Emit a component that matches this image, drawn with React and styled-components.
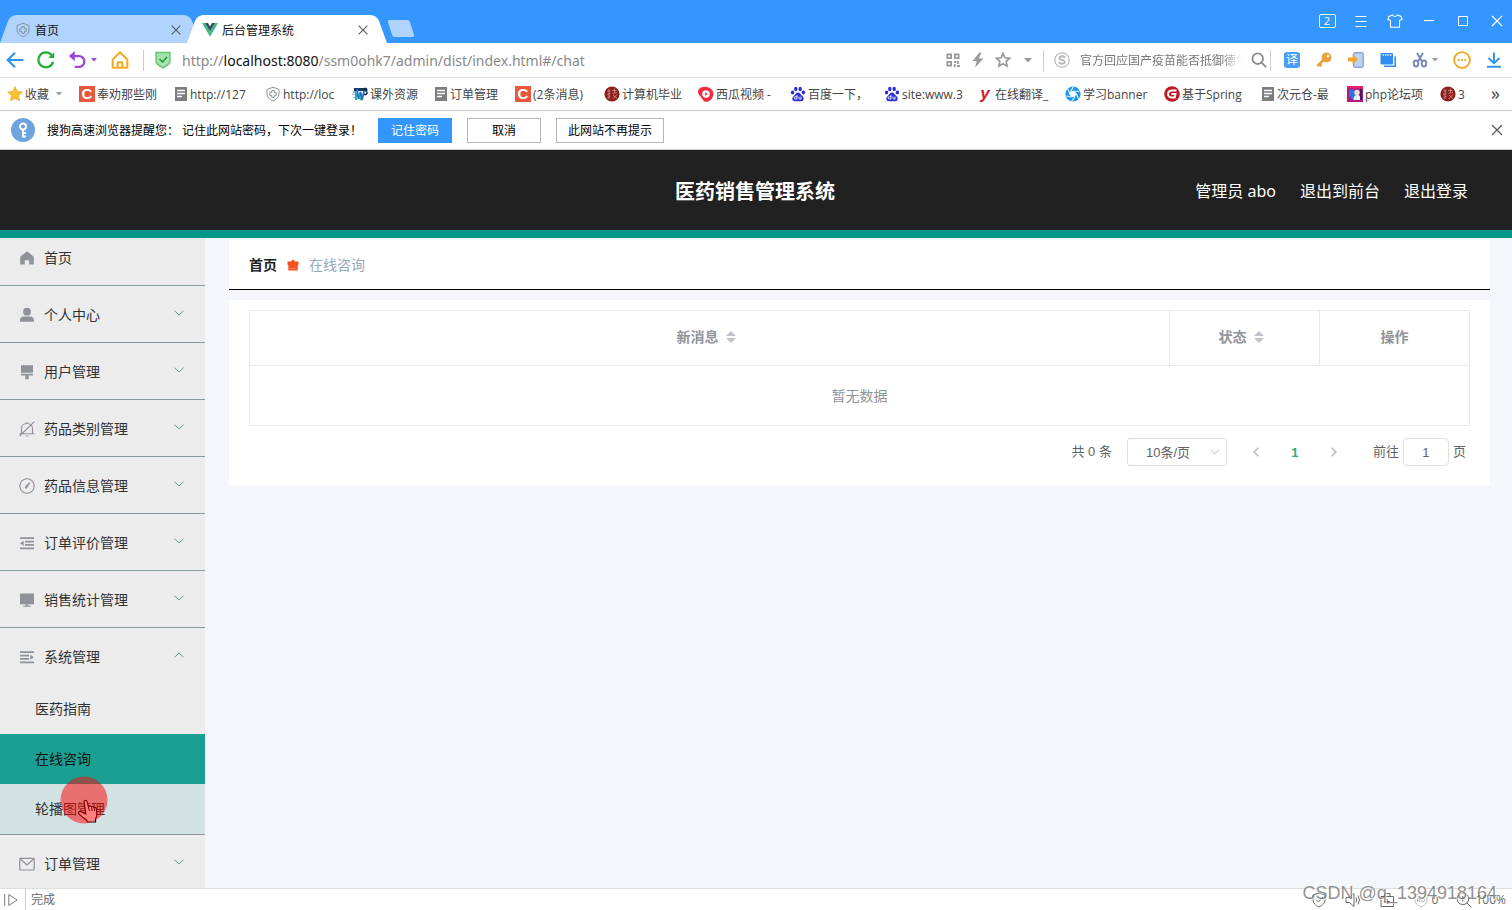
import React from "react";
import styled, { createGlobalStyle, css } from "styled-components";

const GlobalStyle = createGlobalStyle`
  *, *::before, *::after { box-sizing: border-box; }
  html, body { margin: 0; padding: 0; }
  body, button, input, select {
    font-family: "Open Sans", "Noto Sans CJK SC", sans-serif;
  }
  button { border: 0; padding: 0; margin: 0; background: none; cursor: pointer; }
  svg { display: block; flex: none; }
  a { color: inherit; text-decoration: none; }
  ul { list-style: none; margin: 0; padding: 0; }
`;

const Window = styled.div`
  display: flex;
  flex-direction: column;
  height: 100vh;
  overflow: hidden;
  background: #fff;
`;

/* ---------- title bar ---------- */

const TitleBar = styled.header`
  display: flex;
  align-items: flex-end;
  height: 43px;
  flex: none;
  background: #3496ff;
`;

const Tab = styled.div`
  position: relative;
  isolation: isolate;
  display: flex;
  align-items: center;
  width: 200px;
  height: 28px;
  padding: 2px 16px 0 15px;
  margin-right: -13px;
  z-index: ${(p) => (p.$active ? 2 : 1)};
  font-size: 12px;
  color: #111;
  button { color: #555; }
  &::before, &::after {
    content: "";
    position: absolute;
    z-index: -1;
    top: 0;
    bottom: 0;
    background: ${(p) => (p.$active ? "#fff" : "#b1d4ff")};
  }
  &::before {
    left: 0;
    right: 50%;
    transform: skewX(-20deg);
    transform-origin: bottom;
    border-radius: 6px 0 0 0;
  }
  &::after {
    left: 40%;
    right: 0;
    transform: skewX(20deg);
    transform-origin: bottom;
    border-radius: 0 6px 0 0;
  }
`;

const TabTitle = styled.span`
  flex: 1;
  margin-left: 4px;
  padding-top: 2px;
  line-height: 20px;
`;

const NewTab = styled.button`
  width: 22px;
  height: 17px;
  margin: 0 0 6px 16px;
  border-radius: 2px;
  background: #b1d4ff;
  transform: skewX(18deg);
`;

const WindowControls = styled.div`
  display: flex;
  align-items: center;
  gap: 14px;
  height: 43px;
  margin-left: auto;
  padding: 0 5px 2px 0;
  color: #fff;
`;

const IconButton = styled.button`
  display: flex;
  align-items: center;
  justify-content: center;
  flex: none;
  width: ${(p) => p.$w || 20}px;
  height: 20px;
  color: inherit;
`;

const TabCount = styled.span`
  display: block;
  width: 17px;
  height: 14px;
  border: 1px solid #fff;
  border-radius: 2px;
  font-size: 11px;
  line-height: 12px;
  color: #fff;
`;

/* ---------- toolbar ---------- */

const Toolbar = styled.div`
  display: flex;
  align-items: center;
  height: 35px;
  flex: none;
  border-bottom: 1px solid #e2e2e2;
`;

const NavGroup = styled.div`
  display: flex;
  align-items: center;
  gap: 11px;
  padding-left: 5px;
`;

const Pair = styled.div`
  display: flex;
  align-items: center;
  gap: ${(p) => p.$gap || 0}px;
`;

const Divider = styled.i`
  flex: none;
  width: 1px;
  height: 21px;
  margin: ${(p) => p.$m};
  background: #ccc;
`;

const Address = styled.div`
  flex: 1;
  margin-left: 9px;
  padding-top: 1px;
  font-family: "Noto Sans", sans-serif;
  font-size: 14px;
  line-height: 20px;
  color: #888;
  white-space: nowrap;
  b { font-weight: 400; color: #111; }
`;

const AddressTools = styled.div`
  display: flex;
  align-items: center;
  gap: 5px;
  color: #9a9a9a;
`;

const SearchBox = styled.label`
  display: flex;
  align-items: center;
  width: 216px;
  color: #8a8a8a;
  input {
    flex: 1;
    min-width: 0;
    margin: 0 6px 0 10px;
    padding: 1px 0 0;
    border: 0;
    outline: 0;
    font-size: 12px;
    line-height: 20px;
    color: #777;
    mask-image: linear-gradient(90deg, #000 88%, transparent);
  }
`;

const Extensions = styled.div`
  display: flex;
  align-items: center;
  gap: 12px;
  padding: 0 8px 0 11px;
`;

const Translate = styled.span`
  display: block;
  width: 16px;
  height: 16px;
  border-radius: 3px;
  background: #4a9df5;
  color: #fff;
  font-size: 12px;
  line-height: 16px;
  text-align: center;
`;

/* ---------- bookmarks ---------- */

const Bookmarks = styled.nav`
  display: flex;
  align-items: center;
  height: 33px;
  flex: none;
  padding-left: 7px;
  border-bottom: 1px solid #c9c9c9;
  color: #444;
  font-size: 12px;
`;

const Bookmark = styled.a`
  display: flex;
  align-items: center;
  gap: 2px;
  width: ${(p) => p.$w}px;
  flex: none;
  line-height: 20px;
  white-space: nowrap;
`;

const BookmarkLabel = styled.span`
  padding-top: 2px;
`;

const Favicon = styled.span`
  display: flex;
  align-items: center;
  justify-content: center;
  flex: none;
  width: 16px;
  height: 16px;
  background: ${(p) => p.$bg || "transparent"};
  color: ${(p) => p.$fg || "#fff"};
  font-family: "Liberation Sans", "Noto Sans CJK SC", sans-serif;
  font-weight: 700;
  font-style: ${(p) => (p.$italic ? "italic" : "normal")};
  font-size: ${(p) => p.$size || 14}px;
  line-height: 16px;
`;

const More = styled.button`
  margin-left: auto;
  padding: 0 12px 2px 0;
  font-size: 18px;
  line-height: 20px;
  color: #444;
`;

/* ---------- password prompt ---------- */

const Prompt = styled.div`
  display: flex;
  align-items: center;
  height: 39px;
  flex: none;
  padding: 0 5px 0 11px;
  border-bottom: 1px solid #ccc;
  font-size: 12px;
  color: #000;
  p { width: 331px; margin: 0 0 0 12px; padding-top: 2px; line-height: 20px; white-space: pre; }
`;

const PromptClose = styled(IconButton)`
  margin-left: auto;
  color: #555;
`;

const KeyBadge = styled.span`
  display: flex;
  align-items: center;
  justify-content: center;
  width: 24px;
  height: 24px;
  border-radius: 50%;
  background: #6fa3e0;
`;

const PromptButton = styled.button`
  min-width: 74px;
  height: 25px;
  margin-right: 15px;
  padding: 2px 11px 0;
  border: 1px solid ${(p) => (p.$primary ? "#3496ff" : "#b5b5b5")};
  background: ${(p) => (p.$primary ? "#3496ff" : "#fff")};
  color: ${(p) => (p.$primary ? "#fff" : "#000")};
  font-size: 12px;
  line-height: 20px;
`;

/* ---------- application ---------- */

const AppHeader = styled.header`
  display: grid;
  grid-template-columns: 1fr auto 1fr;
  align-items: center;
  height: 88px;
  flex: none;
  padding: 0 44px;
  background: #212121;
  border-bottom: 8px solid #009688;
  color: #fff;
  h1 { grid-column: 2; margin: 0; padding: 4px 2px 0 0; font-size: 20px; line-height: 28px; font-weight: 700; }
`;

const UserLinks = styled.nav`
  display: flex;
  justify-content: flex-end;
  gap: 24px;
  padding-top: 1px;
  font-family: "Noto Sans", "Noto Sans CJK SC", sans-serif;
  font-size: 16px;
  line-height: 24px;
`;

const Body = styled.div`
  display: flex;
  flex: 1;
  min-height: 0;
  background: #f4f6fb;
`;

const Sidebar = styled.nav`
  width: 205px;
  flex: none;
  overflow: hidden;
  background: #ececec;
`;

const MenuGroup = styled.li`
  border-bottom: 1px solid #859a9c;
`;

const MenuItem = styled.button`
  display: flex;
  align-items: center;
  width: 100%;
  height: ${(p) => (p.$top ? 47 : 56)}px;
  padding: 2px 20px 0 18px;
  padding-bottom: ${(p) => (p.$top ? 9 : 0)}px;
  text-align: left;
  font-size: 14px;
  line-height: 20px;
  color: #303133;
  span { flex: 1; margin-left: 8px; }
`;

const Chevron = styled.svg`
  margin-bottom: 4px;
  color: #5f9d96;
`;

const SubItem = styled.a`
  position: relative;
  display: flex;
  align-items: center;
  height: 50px;
  padding-left: 35px;
  font-size: 14px;
  line-height: 20px;
  color: #303133;
  ${(p) => p.$state === "active" && css`background: #1a9f92; color: #111;`}
  ${(p) => p.$state === "hover" && css`background: #d2e1e1;`}
`;

const Pointer = styled.svg`
  position: absolute;
  left: 60px;
  top: -8px;
`;

const Main = styled.main`
  flex: 1;
  min-width: 0;
  padding: 2px 22px 0 24px;
`;

const Breadcrumb = styled.nav`
  display: flex;
  align-items: center;
  gap: 10px;
  height: 50px;
  padding-left: 20px;
  margin-bottom: 10px;
  background: #fff;
  border-bottom: 1px solid #000;
  font-size: 14px;
  line-height: 20px;
  color: #97a8be;
  a { font-weight: 700; color: #222; }
`;

const Card = styled.section`
  padding: 10px 20px 20px;
  background: #fff;
`;

const Table = styled.table`
  width: 100%;
  table-layout: fixed;
  border-collapse: collapse;
  border: 1px solid #ebeaea;
  color: #909399;
  font-size: 14px;
  line-height: 23px;
  th, td { padding: 0; text-align: center; border: 1px solid #ebeaea; }
  th { height: 55px; padding-bottom: 3px; font-weight: 700; }
  td { height: 60px; }
`;

const SortHeader = styled.span`
  display: inline-flex;
  align-items: center;
  svg { margin: 0 7px; }
`;

const Pagination = styled.div`
  display: flex;
  justify-content: flex-end;
  align-items: center;
  margin-top: 12px;
  padding-right: 4px;
  font-family: "Liberation Sans", "Noto Sans CJK SC", sans-serif;
  font-size: 13px;
  line-height: 28px;
  color: #606266;
`;

const SizePicker = styled.div`
  position: relative;
  margin: 0 14px 0 15px;
  select {
    display: block;
    width: 100px;
    height: 28px;
    padding: 0 0 0 18px;
    appearance: none;
    border: 1px solid #dcdfe6;
    border-radius: 3px;
    background: #fff;
    color: #606266;
    font-family: inherit;
    font-size: 13px;
  }
  svg { position: absolute; right: 7px; top: 11px; pointer-events: none; }
`;

const PageButton = styled.button`
  display: flex;
  align-items: center;
  justify-content: center;
  width: ${(p) => (p.$current ? 48 : 30)}px;
  height: 28px;
  font-family: inherit;
  font-size: 13px;
  font-weight: 700;
  color: ${(p) => (p.$current ? "#2bab7f" : "#b8bcc5")};
`;

const Jumper = styled.label`
  display: flex;
  align-items: center;
  gap: 4px;
  margin-left: 24px;
  input {
    width: 46px;
    height: 28px;
    padding: 0;
    border: 1px solid #dcdfe6;
    border-radius: 4px;
    text-align: center;
    color: #606266;
    font-family: inherit;
    font-size: 13px;
  }
`;

/* ---------- status bar ---------- */

const StatusBar = styled.footer`
  position: relative;
  display: flex;
  align-items: center;
  height: 22px;
  flex: none;
  padding: 0 6px 0 4px;
  border-top: 1px solid #dedede;
  background: #fff;
  font-size: 12px;
  line-height: 20px;
  color: #666;
`;

const StatusTools = styled.div`
  display: flex;
  align-items: center;
  gap: 18px;
  margin-left: auto;
`;

const Watermark = styled.span`
  position: absolute;
  right: 15px;
  bottom: 7px;
  font-family: "Liberation Sans", sans-serif;
  font-size: 18px;
  line-height: 20px;
  color: rgba(110, 110, 110, 0.75);
  text-shadow: 1px 1px 0 rgba(255, 255, 255, 0.7);
  pointer-events: none;
`;

/* ---------- drawings ---------- */

const Stroke = ({ size = 16, w = 1, children, ...rest }) => (
  <svg width={size} height={size} viewBox="0 0 16 16" fill="none" stroke="currentColor" strokeWidth={w} aria-hidden="true" {...rest}>
    {children}
  </svg>
);

const CloseIcon = ({ size = 16 }) => (
  <Stroke size={size} w={1.2}><path d="M3 3l10 10M13 3L3 13" /></Stroke>
);

const ShieldCross = () => (
  <Stroke color="#8a8f98">
    <path d="M8 1.2L14 3.5v4.2c0 3.4-2.6 5.8-6 7.2-3.4-1.4-6-3.8-6-7.2V3.5z" />
    <path d="M6.7 4.700h2.600v2h2v2.600h-2v2H6.700v-2h-2V6.700h2z" />
  </Stroke>
);

const VueLogo = () => (
  <svg width="16" height="14" viewBox="0 0 16 14" aria-hidden="true">
    <path d="M0 0h3.200L8 8.300 12.800 0H16L8 13.800z" fill="#41b883" />
    <path d="M3.200 0H6l2 3.500L10 0h2.800L8 8.300z" fill="#35495e" />
  </svg>
);

const CaretDown = ({ color = "#999" }) => (
  <svg width="6" height="4" viewBox="0 0 6 4" aria-hidden="true"><path d="M0 0h6L3 3.500z" fill={color} /></svg>
);

const CaretDownWide = () => (
  <svg width="8" height="5" viewBox="0 0 8 5" aria-hidden="true"><path d="M0 0h8L4 4.500z" fill="#999" /></svg>
);

const DocIcon = () => (
  <svg width="14" height="16" viewBox="0 0 14 16" aria-hidden="true">
    <path d="M1 1h12v14H1z" fill="#7d7d7d" />
    <path d="M3 4.500h8M3 7.500h8M3 10.500h5" stroke="#fff" strokeWidth="1.300" />
  </svg>
);

const Paw = () => (
  <svg width="16" height="16" viewBox="0 0 16 16" fill="#2b2fd6" aria-hidden="true">
    <ellipse cx="2.600" cy="6.500" rx="1.700" ry="2.100" />
    <ellipse cx="5.800" cy="3" rx="1.700" ry="2.300" />
    <ellipse cx="10.200" cy="3" rx="1.700" ry="2.300" />
    <ellipse cx="13.400" cy="6.500" rx="1.700" ry="2.100" />
    <path d="M8 6.500c2 0 2.600 2 4 3.200 1.700 1.500 2 2.900 1.400 4.200-.7 1.500-2.300 1.300-5.400 1.300s-4.700.2-5.400-1.300C2 12.600 2.300 11.200 4 9.700 5.400 8.500 6 6.500 8 6.500z" />
    <path d="M7 9v4H5.300a1.100 1.100 0 010-2.300H7M9 10.600v1.800q0 .7.700.7H11v-2.500" fill="none" stroke="#fff" strokeWidth=".9" />
  </svg>
);

const Star = () => (
  <svg width="16" height="16" viewBox="0 0 16 16" aria-hidden="true">
    <path d="M8 .8l2.200 4.700 5.100.6-3.800 3.500 1 5.100L8 12.200l-4.500 2.500 1-5.100L.7 6.100l5.100-.6z" fill="#fbc22f" stroke="#e9a92a" strokeWidth=".8" />
  </svg>
);

const SealIcon = () => (
  <svg width="16" height="16" viewBox="0 0 16 16" aria-hidden="true">
    <circle cx="8" cy="8" r="7.600" fill="#8b1f1b" />
    <path d="M3.500 5h3M5 2.800v10M3 8.500l3.500-.8M3.500 12l3-2M8 4.500h4.500M10.500 2.500v4M8.500 7.500l4.500-1M9 9l4 3.500M13 8.500L8.500 13" stroke="#dfa59e" strokeWidth=".7" fill="none" />
  </svg>
);

const PhotoIcon = () => (
  <svg width="16" height="16" viewBox="0 0 16 16" aria-hidden="true">
    <path d="M0 0h16v16H0z" fill="#b5177c" />
    <path d="M0 0h16v2.500H0z" fill="#e5216b" />
    <path d="M2 4l4-1 3 3v6l-3 2-4-4z" fill="#2f6fe0" />
    <circle cx="10" cy="6.500" r="2.700" fill="#f3d9cf" />
    <path d="M6.500 14c0-4 1.500-5 4-5s3 2 3 5z" fill="#eef1fa" />
    <path d="M13 3h2v11h-2z" fill="#35205e" />
  </svg>
);

const WbIcon = () => (
  <svg width="16" height="16" viewBox="0 0 16 16" aria-hidden="true">
    <path d="M2 2h12v3H2z" fill="#123a63" />
    <path d="M1 5h4v2H1zM0 8h3v1H0zM1 11h3v1H1z" fill="#9bbcd8" />
    <path d="M5 3l1.500 10L8.500 6l1.500 8 2-9" stroke="#1d6fd0" strokeWidth="1.800" fill="none" />
    <path d="M7 8l2 6" stroke="#3aa56a" strokeWidth="1.500" />
    <path d="M12 2.500h2q1.500 1.500 0 2.500 2 1.500 0 3.500h-2" stroke="#0c2748" strokeWidth="1.500" fill="none" />
    <path d="M3 5h2v9H3z" fill="#2aa3d6" />
  </svg>
);

const ApertureIcon = () => (
  <svg width="16" height="16" viewBox="0 0 16 16" aria-hidden="true">
    <circle cx="8" cy="8" r="7.600" fill="#1f97e0" />
    <circle cx="8" cy="8" r="3" fill="#fff" />
    <path d="M5.500 6L8.500.5M8.500 5l6 .5M10.900 7l2.600 5.500M10 10.600L6.500 15.500M7 11L1.200 10M5.200 9L3 3" stroke="#d9f0ff" strokeWidth="1.200" />
  </svg>
);

const XiguaIcon = () => (
  <svg width="16" height="16" viewBox="0 0 16 16" aria-hidden="true">
    <path d="M1 3C4-.5 12 0 14.500 4.500c2.500 5-1 10.800-6 11.300C5 16 4.500 12.500 2 10 0 8-.8 5 1 3z" fill="#f52b3c" />
    <circle cx="8" cy="8" r="3.800" fill="#fff" />
    <path d="M7 6.200l2.800 1.800L7 9.800z" fill="#f52b3c" />
  </svg>
);

const GIcon = () => (
  <svg width="16" height="16" viewBox="0 0 16 16" aria-hidden="true">
    <circle cx="8" cy="8" r="7.800" fill="#c31525" />
    <path d="M12.500 4.500H7.500Q4.200 4.800 4 8q.2 3.500 3.500 3.500h3.200l.8-3.500H7.500" fill="none" stroke="#fff" strokeWidth="1.900" />
  </svg>
);

const SortCaret = () => (
  <svg width="10" height="12" viewBox="0 0 10 12" fill="#c0c4cc" aria-hidden="true"><path d="M0 5l5-5 5 5zM0 7h10l-5 5z" /></svg>
);

const menuIcons = {
  home: <path d="M8 1.200l6.800 5.600V14.500h-4.600v-4.300H5.800v4.300H1.200V6.800z" fill="currentColor" />,
  user: <><circle cx="8" cy="4.700" r="3.900" fill="currentColor" /><path d="M1 14.800v-1.500c0-2.300 1.500-3.800 3.800-3.800h6.400c2.300 0 3.800 1.500 3.800 3.800v1.500z" fill="currentColor" /></>,
  brush: <path d="M2 1.200h12v7.600H2zM2 9.800h12v1.600H9.700v3.800H6.300v-3.800H2z" fill="currentColor" />,
  bell: <g fill="none" stroke="currentColor" strokeWidth="1.100"><path d="M2.500 12.800h11V7.500c0-3-2.200-5-5.500-5S2.500 4.500 2.500 7.500zM.5 12.800h15M6.800 15h2.400M8 1v1.500M.7 15L15.300.7" /></g>,
  gauge: <g fill="none" stroke="currentColor" strokeWidth="1.100"><circle cx="8" cy="8" r="7.200" /><path d="M10.800 4.500L7.300 10.200 6.500 9z" fill="currentColor" /></g>,
  fold: <g fill="currentColor"><path d="M1 2.200h14V4H1zM6 5.700h9v1.700H6zM6 9.100h9v1.700H6zM1 12.500h14v1.700H1zM1 8.200l3.700-2.500v5z" /></g>,
  monitor: <path d="M1 1.500h14v10.700H1zM6.500 12.500h3v1.200h2.300v1H4.200v-1h2.300z" fill="currentColor" />,
  unfold: <g fill="currentColor"><path d="M1 2.200h14V4H1zM1 5.700h9v1.700H1zM1 9.100h9v1.700H1zM1 12.500h14v1.700H1zM15 8.200l-3.700-2.500v5z" /></g>,
  mail: <g fill="none" stroke="currentColor" strokeWidth="1.200"><rect x=".8" y="2.300" width="14.400" height="11.700" rx=".8" /><path d="M1.500 3l6.500 6 6.500-6" /></g>,
};

const menu = [
  { icon: "home", label: "首页" },
  { icon: "user", label: "个人中心" },
  { icon: "brush", label: "用户管理" },
  { icon: "bell", label: "药品类别管理" },
  { icon: "gauge", label: "药品信息管理" },
  { icon: "fold", label: "订单评价管理" },
  { icon: "monitor", label: "销售统计管理" },
  {
    icon: "unfold",
    label: "系统管理",
    children: [
      { label: "医药指南" },
      { label: "在线咨询", state: "active" },
      { label: "轮播图管理", state: "hover" },
    ],
  },
  { icon: "mail", label: "订单管理" },
];

const csdn = <Favicon $bg="#e9573c" $size={15}>C</Favicon>;

const bookmarks = [
  { w: 95, icon: csdn, label: "奉劝那些刚" },
  { w: 91, icon: <DocIcon />, label: "http://127" },
  { w: 87, icon: <ShieldCross />, label: "http://loc" },
  { w: 82, icon: <WbIcon />, label: "课外资源" },
  { w: 81, icon: <DocIcon />, label: "订单管理" },
  { w: 89, icon: csdn, label: "(2条消息)" },
  { w: 94, icon: <SealIcon />, label: "计算机毕业" },
  { w: 92, icon: <XiguaIcon />, label: "西瓜视频 -" },
  { w: 94, icon: <Paw />, label: "百度一下，" },
  { w: 93, icon: <Paw />, label: "site:www.3" },
  { w: 88, icon: <Favicon $fg="#d61c2c" $italic $size={17}>y</Favicon>, label: "在线翻译_" },
  { w: 99, icon: <ApertureIcon />, label: "学习banner" },
  { w: 97, icon: <GIcon />, label: "基于Spring" },
  { w: 86, icon: <DocIcon />, label: "次元仓-最" },
  { w: 93, icon: <PhotoIcon />, label: "php论坛项" },
  { w: 30, icon: <SealIcon />, label: "3" },
];

function HandPointer() {
  return (
    <Pointer width="48" height="48" viewBox="0 0 48 48" aria-hidden="true">
      <path d="M24 25.500c.6-1.700 2.700-1.500 3.100.2l1.400 5.200.5-.7c1-.6 2.200-.2 2.500.7.800-.7 2.200-.4 2.600.6 1.100-.5 2 .1 2.200 1.200l.6 4.500c.2 2.500-.4 4-1.400 5.800v3h-8l-1.300-2.400c-2.200-1-4.500-3.200-7.200-5.600-1.300-1.600 0-3.200 1.800-2.400l5 2.400z" fill="#fff" stroke="#000" strokeWidth="1.200" />
      <path d="M28.600 31l.8 4M31.600 31.500l.6 3.500M34.200 32l.5 3" stroke="#000" fill="none" />
      <circle cx="24" cy="24" r="23.500" fill="rgba(255,0,0,0.5)" />
    </Pointer>
  );
}

function BrowserTop() {
  return (
    <>
      <TitleBar>
        <Tab>
          <ShieldCross />
          <TabTitle>首页</TabTitle>
          <IconButton $w={16} aria-label="关闭标签"><CloseIcon size={14} /></IconButton>
        </Tab>
        <Tab $active>
          <VueLogo />
          <TabTitle>后台管理系统</TabTitle>
          <IconButton $w={16} aria-label="关闭标签"><CloseIcon size={14} /></IconButton>
        </Tab>
        <NewTab aria-label="新建标签" />
        <WindowControls>
          <IconButton aria-label="标签数"><TabCount>2</TabCount></IconButton>
          <IconButton aria-label="菜单"><Stroke w={1.1}><path d="M2.500 3.500h11M2.500 8.500h11M2.500 13.500h11" /></Stroke></IconButton>
          <IconButton aria-label="皮肤"><Stroke w={1.1}><path d="M5.500 2L2 3.500.9 6.500 3.500 7.500v6.800h9V7.500l2.600-1L14 3.500 10.500 2Q8 5 5.500 2z" /></Stroke></IconButton>
          <IconButton aria-label="最小化"><Stroke w={1.2}><path d="M3 7.500h10" /></Stroke></IconButton>
          <IconButton aria-label="最大化"><Stroke><path d="M3.500 3.500h9v9h-9z" /></Stroke></IconButton>
          <IconButton aria-label="关闭"><CloseIcon /></IconButton>
        </WindowControls>
      </TitleBar>

      <Toolbar>
        <NavGroup>
          <IconButton aria-label="后退">
            <Stroke size={18} w={1.9} color="#3093f2"><path d="M15.500 8H1.500M8 1.500L1.500 8 8 14.500" /></Stroke>
          </IconButton>
          <IconButton aria-label="刷新">
            <Stroke size={18} w={2} color="#1fae2f"><path d="M14.300 9.500A6.600 6.600 0 1 1 13 3.700" /><path d="M15.300 1v5.300H10z" fill="currentColor" stroke="none" /></Stroke>
          </IconButton>
          <Pair $gap={2}>
            <IconButton aria-label="恢复">
              <Stroke size={18} w={2} color="#9a45dd"><path d="M2.500 4.500h7.200a4.800 4.800 0 0 1 0 9.700H6" /><path d="M6 0v9L.8 4.500z" fill="currentColor" stroke="none" /></Stroke>
            </IconButton>
            <IconButton $w={10} aria-label="恢复列表"><CaretDown color="#9a45dd" /></IconButton>
          </Pair>
          <IconButton aria-label="主页">
            <Stroke size={18} w={1.8} color="#f2aa1f"><path d="M1.500 7.500L8 1.200l6.500 6.300v7.300h-13z" /><path d="M6 14.500V10h4v4.500" /></Stroke>
          </IconButton>
        </NavGroup>
        <Divider $m="0 9px 0 13px" />
        <IconButton aria-label="网站安全">
          <svg width="16" height="18" viewBox="0 0 16 18" aria-hidden="true">
            <path d="M1 1.500h14V11q-.5 2-7 6Q1.500 13 1 11z" fill="#a6e3ac" stroke="#63c46d" strokeWidth="1.300" />
            <path d="M4.500 8l3 3 4.500-5" fill="none" stroke="#27943a" strokeWidth="1.500" />
          </svg>
        </IconButton>
        <Address>http://<b>localhost:8080</b>/ssm0ohk7/admin/dist/index.html#/chat</Address>
        <AddressTools>
          <IconButton aria-label="二维码">
            <Stroke w={1.8}><path d="M2.400 2.400h3.700v3.700H2.400zM9.900 2.400h3.700v3.700H9.900zM2.400 9.900h3.700v3.700H2.400z" /><path d="M9 10h2.500M13 9v3M9.800 12v3M12 14h3" /></Stroke>
          </IconButton>
          <IconButton aria-label="加速"><svg width="14" height="16" viewBox="0 0 14 16" aria-hidden="true"><path d="M8.500.5L1.500 9h4.300L4 15.500 12.500 6.500H7.800L10.500.5z" fill="#9a9a9a" /></svg></IconButton>
          <IconButton aria-label="收藏"><Stroke w={1.7}><path d="M8 1.500l1.900 4.300 4.700.5-3.500 3.100 1 4.600L8 11.700l-4.100 2.300 1-4.600L1.400 6.300l4.700-.5z" /></Stroke></IconButton>
          <IconButton aria-label="更多"><CaretDownWide /></IconButton>
        </AddressTools>
        <Divider $m="0 10px 0 5px" />
        <SearchBox>
          <Stroke color="#b5b5b5" w={1.1}><circle cx="8" cy="8" r="7.200" /><path d="M11.300 5.500Q8 3.300 5.700 5C4.600 6.700 6.500 7.600 8 8c2 .5 3.400 1.300 2.400 2.900Q8 12.700 4.700 10.600" strokeWidth="1.800" /></Stroke>
          <input aria-label="搜索" defaultValue="官方回应国产疫苗能否抵御德尔塔" />
          <IconButton $w={22} aria-label="开始搜索"><Stroke w={1.8}><circle cx="6.700" cy="6.700" r="5.300" /><path d="M10.600 10.600l4.400 4.600" /></Stroke></IconButton>
        </SearchBox>
        <Divider $m="0" />
        <Extensions>
          <IconButton aria-label="翻译"><Translate>译</Translate></IconButton>
          <IconButton aria-label="密码">
            <svg width="16" height="16" viewBox="0 0 16 16" aria-hidden="true"><circle cx="10.500" cy="5.500" r="5" fill="#e9a13b" /><path d="M8 7.500L1.500 14M3.500 12l2 2" stroke="#e9a13b" strokeWidth="2.600" /><circle cx="12" cy="4" r="1.300" fill="#fff" /></svg>
          </IconButton>
          <IconButton aria-label="手机">
            <svg width="16" height="18" viewBox="0 0 16 18" aria-hidden="true"><rect x="5.700" y="1.700" width="9.500" height="14.500" rx="1.500" fill="#bdd3f2" stroke="#87a4d6" strokeWidth="1.400" /><path d="M0 6.500h4.500v-3L10 8.500l-5.500 5v-3H0z" fill="#f2a52e" /></svg>
          </IconButton>
          <IconButton aria-label="视频">
            <svg width="16" height="16" viewBox="0 0 16 16" aria-hidden="true"><path d="M4 14.300h11.200V4.500" fill="none" stroke="#2f8cf0" strokeWidth="1.600" /><rect x=".5" y="1" width="12.500" height="11.500" rx="1" fill="#2f8cf0" /><path d="M2.500 3h1.300M5 3h1.300M7.500 3h1.300M10 3h1.300" stroke="#fff" strokeWidth="1.300" /></svg>
          </IconButton>
          <Pair>
            <IconButton aria-label="截图">
              <Stroke color="#7d87bd" w={1.9}><ellipse cx="4" cy="11.500" rx="2.300" ry="3" /><ellipse cx="12" cy="11.500" rx="2.300" ry="3" /><path d="M5.800 9.700L11 1M10.200 9.700L5 1" /></Stroke>
            </IconButton>
            <IconButton $w={10} aria-label="截图选项"><CaretDown /></IconButton>
          </Pair>
          <IconButton aria-label="扩展">
            <Stroke size={18} w={1.7} color="#f2a71e"><circle cx="8" cy="8" r="7" /><path d="M4.300 8h1.600M7.200 8h1.600M10.100 8h1.600" /></Stroke>
          </IconButton>
          <IconButton aria-label="下载">
            <Stroke w={1.9} color="#3093e8"><path d="M8 .5v10.500M2.500 6L8 11.200 13.500 6M1 14.700h14" /></Stroke>
          </IconButton>
        </Extensions>
      </Toolbar>

      <Bookmarks aria-label="书签">
        <Bookmark href="#" $w={72}><Star /><BookmarkLabel>收藏</BookmarkLabel><IconButton as="span" $w={16}><CaretDown /></IconButton></Bookmark>
        {bookmarks.map((b, i) => (
          <Bookmark href="#" key={i} $w={b.w}>{b.icon}<BookmarkLabel>{b.label}</BookmarkLabel></Bookmark>
        ))}
        <More aria-label="更多书签">»</More>
      </Bookmarks>

      <Prompt role="alert">
        <KeyBadge>
          <svg width="12" height="16" viewBox="0 0 12 16" fill="none" stroke="#fff" strokeWidth="1.800" aria-hidden="true"><circle cx="6" cy="4.500" r="3" /><path d="M6 7.500v8M6 11h3M6 14.500h3" /></svg>
        </KeyBadge>
        <p>搜狗高速浏览器提醒您： 记住此网站密码，下次一键登录！</p>
        <PromptButton $primary>记住密码</PromptButton>
        <PromptButton>取消</PromptButton>
        <PromptButton>此网站不再提示</PromptButton>
        <PromptClose aria-label="关闭提示"><CloseIcon /></PromptClose>
      </Prompt>
    </>
  );
}

function SideMenu() {
  return (
    <Sidebar aria-label="主菜单">
      <ul>
        {menu.map((m, i) => (
          <MenuGroup key={m.label}>
            <MenuItem $top={i === 0} aria-expanded={i === 0 ? undefined : !!m.children}>
              <svg width="18" height="16" viewBox="-1 0 18 16" color="#8f9299" aria-hidden="true">{menuIcons[m.icon]}</svg>
              <span>{m.label}</span>
              {i > 0 && (
                <Chevron width="12" height="6" viewBox="0 0 12 6" fill="none" stroke="currentColor" aria-hidden="true">
                  <path d={m.children ? "M1.500 5.300L6 1l4.500 4.300" : "M1.500.7L6 5l4.500-4.300"} />
                </Chevron>
              )}
            </MenuItem>
            {m.children && m.children.map((c) => (
              <SubItem href="#" key={c.label} $state={c.state}>
                {c.label}
                {c.state === "hover" && <HandPointer />}
              </SubItem>
            ))}
          </MenuGroup>
        ))}
      </ul>
    </Sidebar>
  );
}

function ChatPage() {
  return (
    <Main>
      <Breadcrumb aria-label="面包屑">
        <a href="#">首页</a>
        <svg width="12" height="12" viewBox="0 0 12 12" aria-hidden="true">
          <path d="M.5 2.500H4L6 .2l2 2.300h3.500v3.500h-.8V11.500H1.300V6H.5z" fill="#f4511e" />
          <path d="M2.500 9.500h7" stroke="#fb8a6c" />
        </svg>
        <span>在线咨询</span>
      </Breadcrumb>
      <Card>
        <Table>
          <colgroup><col /><col width="150" /><col width="150" /></colgroup>
          <thead>
            <tr>
              <th scope="col"><SortHeader>新消息<SortCaret /></SortHeader></th>
              <th scope="col"><SortHeader>状态<SortCaret /></SortHeader></th>
              <th scope="col">操作</th>
            </tr>
          </thead>
          <tbody><tr><td colSpan={3}>暂无数据</td></tr></tbody>
        </Table>
        <Pagination>
          <span>共 0 条</span>
          <SizePicker>
            <select aria-label="每页条数" defaultValue="10"><option value="10">10条/页</option></select>
            <svg width="10" height="6" viewBox="0 0 10 6" fill="none" stroke="#c0c4cc" aria-hidden="true"><path d="M1 .7L5 5 9 .7" /></svg>
          </SizePicker>
          <PageButton aria-label="上一页"><svg width="8" height="10" viewBox="0 0 8 10" fill="none" stroke="currentColor" strokeWidth="1.500" aria-hidden="true"><path d="M6.500.8L2 5l4.500 4.200" /></svg></PageButton>
          <PageButton $current>1</PageButton>
          <PageButton aria-label="下一页"><svg width="8" height="10" viewBox="0 0 8 10" fill="none" stroke="currentColor" strokeWidth="1.500" aria-hidden="true"><path d="M1.500.8L6 5 1.500 9.200" /></svg></PageButton>
          <Jumper>前往<input type="text" defaultValue="1" />页</Jumper>
        </Pagination>
      </Card>
    </Main>
  );
}

export default function App() {
  return (
    <Window>
      <GlobalStyle />
      <BrowserTop />
      <AppHeader>
        <h1>医药销售管理系统</h1>
        <UserLinks>
          <span>管理员 abo</span>
          <a href="#">退出到前台</a>
          <a href="#">退出登录</a>
        </UserLinks>
      </AppHeader>
      <Body>
        <SideMenu />
        <ChatPage />
      </Body>
      <StatusBar>
        <Stroke size={14}><path d="M.8 1v14M5.500 1.800v12.400L15 8z" /></Stroke>
        <Divider $m="0 5px 0 7px" />
        完成
        <StatusTools>
          <Stroke><path d="M8 1l6 2v5c0 3-2.500 5.500-6 7-3.500-1.500-6-4-6-7V3zM5 7.500l2.500 2.500L12 5" /></Stroke>
          <Stroke><path d="M1 5.500h3.500L9 1.500v13L4.500 10.500H1zM11 5.500q1.500 2.500 0 5M13 3.500q3 4.500 0 9" /></Stroke>
          <Stroke><path d="M2 4.500h12.500v10H2zM6 4.500v-3h5v3M5.500 9.500h5.500M8.200 7v5" /></Stroke>
          <Pair $gap={3}>
            <Stroke color="#bbb"><path d="M8 1l6 2v5c0 3-2.500 5.500-6 7-3.500-1.500-6-4-6-7V3zM4.500 10V6.500q1-1.500 2 0V10M4.500 8.500h2M9 5.700V10q3-.2 2.800-2.200T9 5.700z" /></Stroke>
            0
          </Pair>
          <Pair $gap={3}>
            <Stroke><circle cx="6.800" cy="6.800" r="5.800" /><path d="M11 11l4.500 4.500M4 6.800h5.600M6.800 4v5.600" /></Stroke>
            100%
          </Pair>
        </StatusTools>
        <Watermark>CSDN @q_1394918164</Watermark>
      </StatusBar>
    </Window>
  );
}
